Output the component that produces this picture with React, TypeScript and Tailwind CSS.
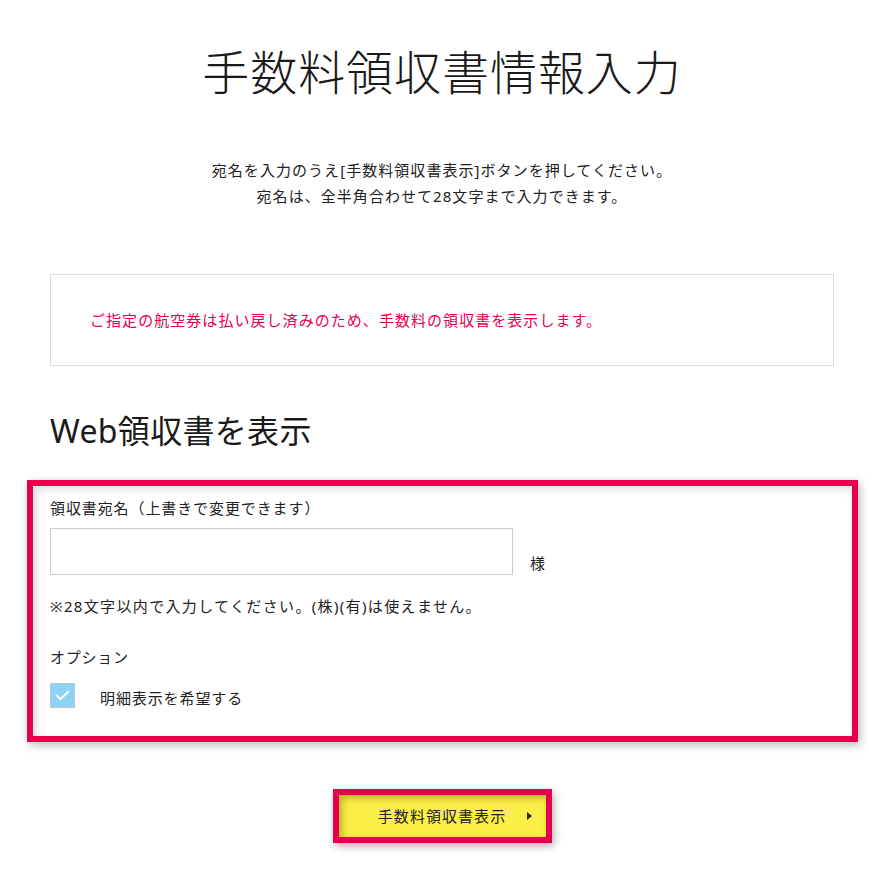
import React from "react";

export default function App() {
  const font = { fontFamily: '"Noto Sans", "Noto Sans CJK JP", sans-serif' };
  return (
    <div className="w-[884px] min-h-[877px] bg-white text-[#222]" style={font}>
      <div className="px-[50px] pt-[43px] pb-[34px]">
        <h1 className="h-[58px] text-center text-[47px] leading-[58px] font-light tracking-[0.02em] text-[#1a1a1a]">
          手数料領収書情報入力
        </h1>
        <div className="mt-[56px] text-center text-[15px] leading-[26px] tracking-[0.07em]">
          <p>宛名を入力のうえ[手数料領収書表示]ボタンを押してください。</p>
          <p>宛名は、全半角合わせて28文字まで入力できます。</p>
        </div>
        <div className="mt-[65px] flex h-[92px] items-center border border-[#dcdcdc] px-[39px]">
          <p className="text-[15px] leading-[22px] tracking-[0.07em] text-[#e4004f]">
            ご指定の航空券は払い戻し済みのため、手数料の領収書を表示します。
          </p>
        </div>
        <h2 className="mt-[45px] h-[40px] text-[32px] leading-[40px] tracking-[0.01em] text-[#1a1a1a]">
          Web領収書を表示
        </h2>
        <div className="-ml-[23px] -mr-[24px] mt-[29px] border-[6px] border-[#e5004f] pl-[17px] pt-[11px] pb-[27px] shadow-[2px_3px_9px_rgba(0,0,0,0.28),inset_3px_3px_9px_rgba(0,0,0,0.14)]">
          <p className="text-[15px] leading-[22px] tracking-[0.06em]">領収書宛名（上書きで変更できます）</p>
          <div className="mt-[9px] flex items-end">
            <div className="h-[47px] w-[463px] border border-[#cccccc] bg-white" />
            <span className="ml-[17px] pb-[1px] text-[15px] leading-[22px]">様</span>
          </div>
          <p className="mt-[20px] text-[15px] leading-[22px] tracking-[0.09em]">
            ※28文字以内で入力してください。(株)(有)は使えません。
          </p>
          <p className="mt-[29px] text-[15px] leading-[22px] tracking-[0.05em]">オプション</p>
          <div className="mt-[14px] flex items-center">
            <div className="flex h-[25px] w-[25px] items-center justify-center border border-[#c4c4c4] bg-[#8dd3f8]">
              <svg width="15" height="11" viewBox="0 0 15 11" fill="none">
                <path d="M1.5 5.5 L5.5 9 L13.5 1.5" stroke="white" strokeWidth="2" strokeLinecap="round" strokeLinejoin="round" />
              </svg>
            </div>
            <span className="ml-[25px] mt-[5px] text-[15px] leading-[22px] tracking-[0.06em]">明細表示を希望する</span>
          </div>
        </div>
        <div className="mt-[47px] flex justify-center">
          <div className="relative flex h-[54px] w-[219px] items-center justify-center border-[6px] border-[#e5004f] bg-[#fbef47] shadow-[2px_3px_8px_rgba(0,0,0,0.3),inset_3px_3px_7px_rgba(110,100,0,0.45)]">
            <span className="text-[15px] leading-[22px] tracking-[0.07em] text-[#222]">手数料領収書表示</span>
            <svg className="absolute right-[14px] top-1/2 -translate-y-1/2" width="5" height="8" viewBox="0 0 5 8">
              <path d="M0 0 L5 4 L0 8 Z" fill="#222" />
            </svg>
          </div>
        </div>
      </div>
    </div>
  );
}
